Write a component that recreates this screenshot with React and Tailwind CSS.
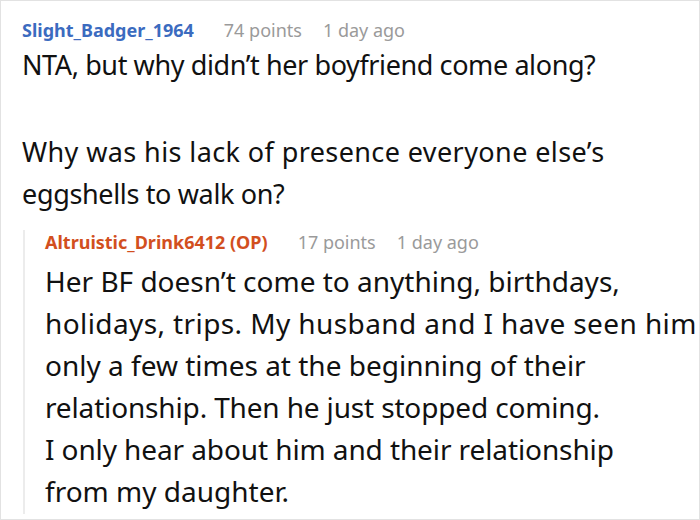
const font = { fontFamily: '"Noto Sans", "Open Sans", sans-serif' };

const Meta = ({ name, nameClass, points, ago }) => (
  <div className="flex items-baseline text-[18px] leading-[24px]">
    <span className={`font-bold ${nameClass}`}>{name}</span>
    <span className="ml-[30px] text-[#9a9a9a]">{points}</span>
    <span className="ml-[21px] text-[#9a9a9a]">{ago}</span>
  </div>
);

export default function App() {
  const reply = [
    ["Her BF doesn\u2019t come to anything, birthdays,", ""],
    ["holidays, trips. My husband and I have seen him", "tracking-[0.4px]"],
    ["only a few times at the beginning of their", ""],
    ["relationship. Then he just stopped coming.", "tracking-[-0.15px]"],
    ["I only hear about him and their relationship", "tracking-[-0.1px]"],
    ["from my daughter.", ""],
  ];

  return (
    <div
      className="w-[700px] h-[520px] bg-white border border-[#e2e2e2] overflow-hidden"
      style={font}
    >
      <div className="pl-[21px] pt-[17px]">
        <Meta name="Slight_Badger_1964" nameClass="text-[#3b6bbf]" points="74 points" ago="1 day ago" />
        <div className="mt-[3px] text-[27px] leading-[40px] text-[#111]">
          <p className="tracking-[-0.4px]">NTA, but why didn’t her boyfriend come along?</p>
          <p className="mt-[47px] tracking-[0.4px]">Why was his lack of presence everyone else’s</p>
          <p className="mt-[2px] tracking-[-0.35px]">eggshells to walk on?</p>
        </div>

        <div className="mt-[16px] ml-[1px] border-l-2 border-[#ececec] pl-[20px] pb-[2px]">
          <Meta name="Altruistic_Drink6412 (OP)" nameClass="text-[#d24f1e]" points="17 points" ago="1 day ago" />
          <div className="mt-[6px] text-[28px] leading-[42px] text-[#111]">
            {reply.map(([l, t]) => (
              <p key={l} className={`whitespace-nowrap ${t}`}>{l}</p>
            ))}
          </div>
        </div>
      </div>
    </div>
  );
}
